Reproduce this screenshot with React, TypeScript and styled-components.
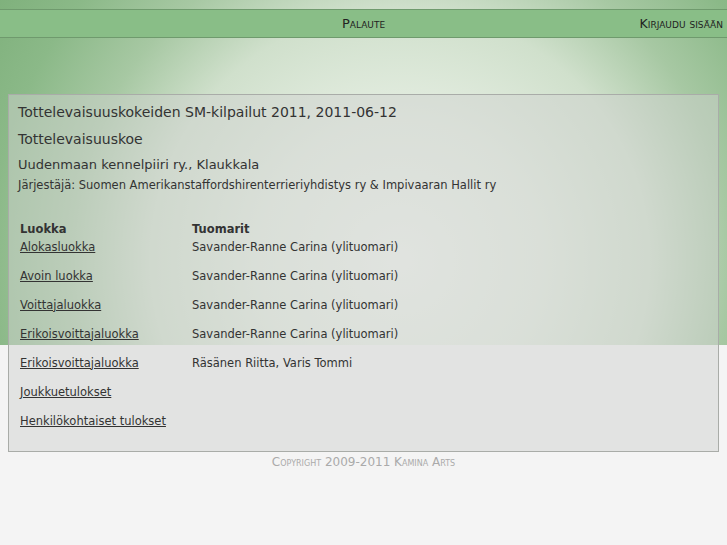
import React from "react";
import styled, { createGlobalStyle } from "styled-components";

const GlobalStyle = createGlobalStyle`
  html, body {
    margin: 0;
    padding: 0;
    background: #f4f4f4;
  }
  body {
    font-family: "DejaVu Sans", Verdana, sans-serif;
    color: #333;
  }
`

const Page = styled.div`
  min-height: 545px;
  background:
    radial-gradient(circle at 400px 260px, #f1f5ef 0px, #e4ede1 140px, #d0e0cc 250px, #a7c8a3 330px, #8bb988 410px, #78ac75 520px) top center / 100% 345px no-repeat,
    #f4f4f4;
  padding-top: 9px;
  overflow: hidden;
`

const NavBar = styled.div`
  position: relative;
  height: 27px;
  background: #89be87;
  border-top: 1px solid #6f9a6d;
  border-bottom: 1px solid #6f9a6d;
  display: flex;
  align-items: center;
  justify-content: center;
  font-variant: small-caps;
  font-size: 13px;
  color: #222;
`

const NavLink = styled.a`
  color: #222;
  text-decoration: none;
`

const LoginLink = styled(NavLink)`
  position: absolute;
  right: 4px;
  top: 6px;
  font-size: 12.5px;
`

const ContentBox = styled.div`
  margin: 56px 8px 0;
  border: 1px solid #a9aca8;
  background: rgba(208, 210, 208, 0.5);
  padding: 8px 9px 8px;
`

const Title = styled.div<{ size: number; gap: number }>`
  font-size: ${p => p.size}px;
  line-height: ${p => p.size + 4}px;
  margin: 0 0 ${p => p.gap}px;
  color: #333;
`

const ResultTable = styled.table`
  margin-top: 28px;
  border-collapse: collapse;
  font-size: 11.5px;
`

const HeadCell = styled.th<{ w?: number }>`
  text-align: left;
  font-weight: bold;
  padding: 0 2px 3px;
  line-height: 15px;
  width: ${p => (p.w ? `${p.w}px` : "auto")};
`

const Cell = styled.td`
  padding: 0 2px 14px;
  vertical-align: top;
  line-height: 15px;
`

const RowLink = styled.a`
  color: #333;
  text-decoration: underline;
`

const Footer = styled.div`
  text-align: center;
  font-variant: small-caps;
  font-size: 12px;
  color: #aaa;
  margin-top: 3px;
`

const rows = [
  { luokka: "Alokasluokka", tuomarit: "Savander-Ranne Carina (ylituomari)" },
  { luokka: "Avoin luokka", tuomarit: "Savander-Ranne Carina (ylituomari)" },
  { luokka: "Voittajaluokka", tuomarit: "Savander-Ranne Carina (ylituomari)" },
  { luokka: "Erikoisvoittajaluokka", tuomarit: "Savander-Ranne Carina (ylituomari)" },
  { luokka: "Erikoisvoittajaluokka", tuomarit: "Räsänen Riitta, Varis Tommi" },
  { luokka: "Joukkuetulokset", tuomarit: "" },
  { luokka: "Henkilökohtaiset tulokset", tuomarit: "" },
]

export default function App() {
  return (
    <>
      <GlobalStyle />
      <Page>
        <NavBar>
          <NavLink href="#">Palaute</NavLink>
          <LoginLink href="#">Kirjaudu sisään</LoginLink>
        </NavBar>
        <ContentBox>
          <Title size={14} gap={9}>Tottelevaisuuskokeiden SM-kilpailut 2011, 2011-06-12</Title>
          <Title size={14} gap={8}>Tottelevaisuuskoe</Title>
          <Title size={13} gap={5}>Uudenmaan kennelpiiri ry., Klaukkala</Title>
          <Title size={11.5} gap={0}>Järjestäjä: Suomen Amerikanstaffordshirenterrieriyhdistys ry &amp; Impivaaran Hallit ry</Title>
          <ResultTable>
            <thead>
              <tr>
                <HeadCell w={168}>Luokka</HeadCell>
                <HeadCell>Tuomarit</HeadCell>
              </tr>
            </thead>
            <tbody>
              {rows.map((r, i) => (
                <tr key={i}>
                  <Cell><RowLink href="#">{r.luokka}</RowLink></Cell>
                  <Cell>{r.tuomarit}</Cell>
                </tr>
              ))}
            </tbody>
          </ResultTable>
        </ContentBox>
        <Footer>Copyright 2009-2011 Kamina Arts</Footer>
      </Page>
    </>
  )
}
